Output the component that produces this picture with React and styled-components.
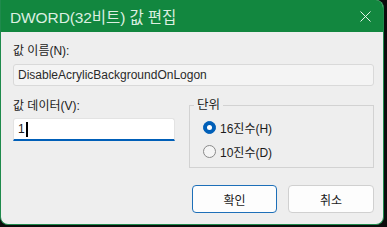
import React from "react";
import styled, { createGlobalStyle } from "styled-components";

const GlobalStyle = createGlobalStyle`
  html, body {
    margin: 0;
    padding: 0;
    background: #0c0c0c;
  }
  body {
    font-family: "Liberation Sans", "Noto Sans CJK KR", sans-serif;
  }
`;

const Window = styled.div`
  box-sizing: border-box;
  width: 384px;
  height: 225px;
  display: flex;
  flex-direction: column;
  background-color: #eeeeee;
  border: 1px solid #1f8a4c;
  border-top: none;
  border-radius: 0 8px 8px 8px;
  overflow: hidden;
`;

const TitleBar = styled.div`
  height: 32px;
  flex-shrink: 0;
  display: flex;
  align-items: center;
  justify-content: space-between;
  padding: 0 9px 0 9px;
  background-color: #12873f;
  color: #dcefe1;
`;

const Title = styled.div`
  font-size: 15.5px;
  letter-spacing: -0.1px;
`;

const CloseIcon = styled.svg`
  width: 11px;
  height: 11px;
  margin-right: 3px;
`;

const Body = styled.div`
  display: flex;
  flex-direction: column;
  padding: 11px 9px 0 12px;
  font-size: 12px;
  color: #1b1b1b;
`;

const Label = styled.div`
  line-height: 16px;
  height: 16px;
`;

const NameField = styled.div`
  box-sizing: border-box;
  height: 22px;
  margin-top: 5px;
  padding: 0 4px;
  display: flex;
  align-items: center;
  background-color: #f4f4f4;
  border: 1px solid #d9d9d9;
  border-radius: 3px;
  color: #2a2a2a;
`;

const Row = styled.div`
  display: flex;
  gap: 14px;
  margin-top: 11px;
`;

const LeftCol = styled.div`
  width: 162px;
  display: flex;
  flex-direction: column;
  padding-top: 1px;
`;

const DataInput = styled.div`
  box-sizing: border-box;
  height: 23px;
  margin-top: 4px;
  padding: 0 4px;
  display: flex;
  align-items: center;
  background-color: #ffffff;
  border: 1px solid #e3e3e3;
  border-bottom: 2px solid #005fb8;
  border-radius: 3px 3px 0 0;
`;

const Caret = styled.span`
  display: inline-block;
  width: 2px;
  height: 15px;
  margin-left: 1px;
  background-color: #000;
`;

const Group = styled.fieldset`
  flex: 1;
  box-sizing: border-box;
  height: 71px;
  margin: 0;
  padding: 6px 0 0 13px;
  border: 1px solid #d2d2d2;
  display: flex;
  flex-direction: column;
  gap: 8px;
`;

const Legend = styled.legend`
  padding: 0 3px;
  margin-left: -9px;
  line-height: 16px;
  font-size: 12.5px;
`;

const RadioRow = styled.div`
  display: flex;
  align-items: center;
  gap: 4px;
  height: 16px;
`;

const RadioDot = styled.span`
  box-sizing: border-box;
  width: 13px;
  height: 13px;
  border-radius: 50%;
  display: flex;
  align-items: center;
  justify-content: center;
  background-color: ${(p) => (p.checked ? "#005fb8" : "#f5f5f5")};
  border: 1px solid ${(p) => (p.checked ? "#005fb8" : "#8a8a8a")};

  &::after {
    content: "";
    display: ${(p) => (p.checked ? "block" : "none")};
    width: 5px;
    height: 5px;
    border-radius: 50%;
    background-color: #ffffff;
  }
`;

const Buttons = styled.div`
  display: flex;
  justify-content: flex-end;
  gap: 11px;
  margin-top: 17px;
`;

const Button = styled.button`
  box-sizing: border-box;
  width: ${(p) => (p.primary ? "85px" : "86px")};
  height: 28px;
  font-family: inherit;
  font-size: 12px;
  color: #1b1b1b;
  background-color: #fdfdfd;
  border: 1px solid ${(p) => (p.primary ? "#1d6fb8" : "#d0d0d0")};
  border-radius: 4px;
  padding: 0;
`;

const App = () => {
  return (
    <>
      <GlobalStyle />
      <Window>
        <TitleBar>
          <Title>DWORD(32비트) 값 편집</Title>
          <CloseIcon viewBox="0 0 11 11">
            <path d="M0.5 0.5 L10.5 10.5 M10.5 0.5 L0.5 10.5" stroke="#e6f3e9" strokeWidth="1" fill="none" />
          </CloseIcon>
        </TitleBar>
        <Body>
          <Label>값 이름(N):</Label>
          <NameField>DisableAcrylicBackgroundOnLogon</NameField>
          <Row>
            <LeftCol>
              <Label>값 데이터(V):</Label>
              <DataInput>
                1<Caret />
              </DataInput>
            </LeftCol>
            <Group>
              <Legend>단위</Legend>
              <RadioRow>
                <RadioDot checked />
                16진수(H)
              </RadioRow>
              <RadioRow>
                <RadioDot />
                10진수(D)
              </RadioRow>
            </Group>
          </Row>
          <Buttons>
            <Button primary>확인</Button>
            <Button>취소</Button>
          </Buttons>
        </Body>
      </Window>
    </>
  );
};

export default App;
